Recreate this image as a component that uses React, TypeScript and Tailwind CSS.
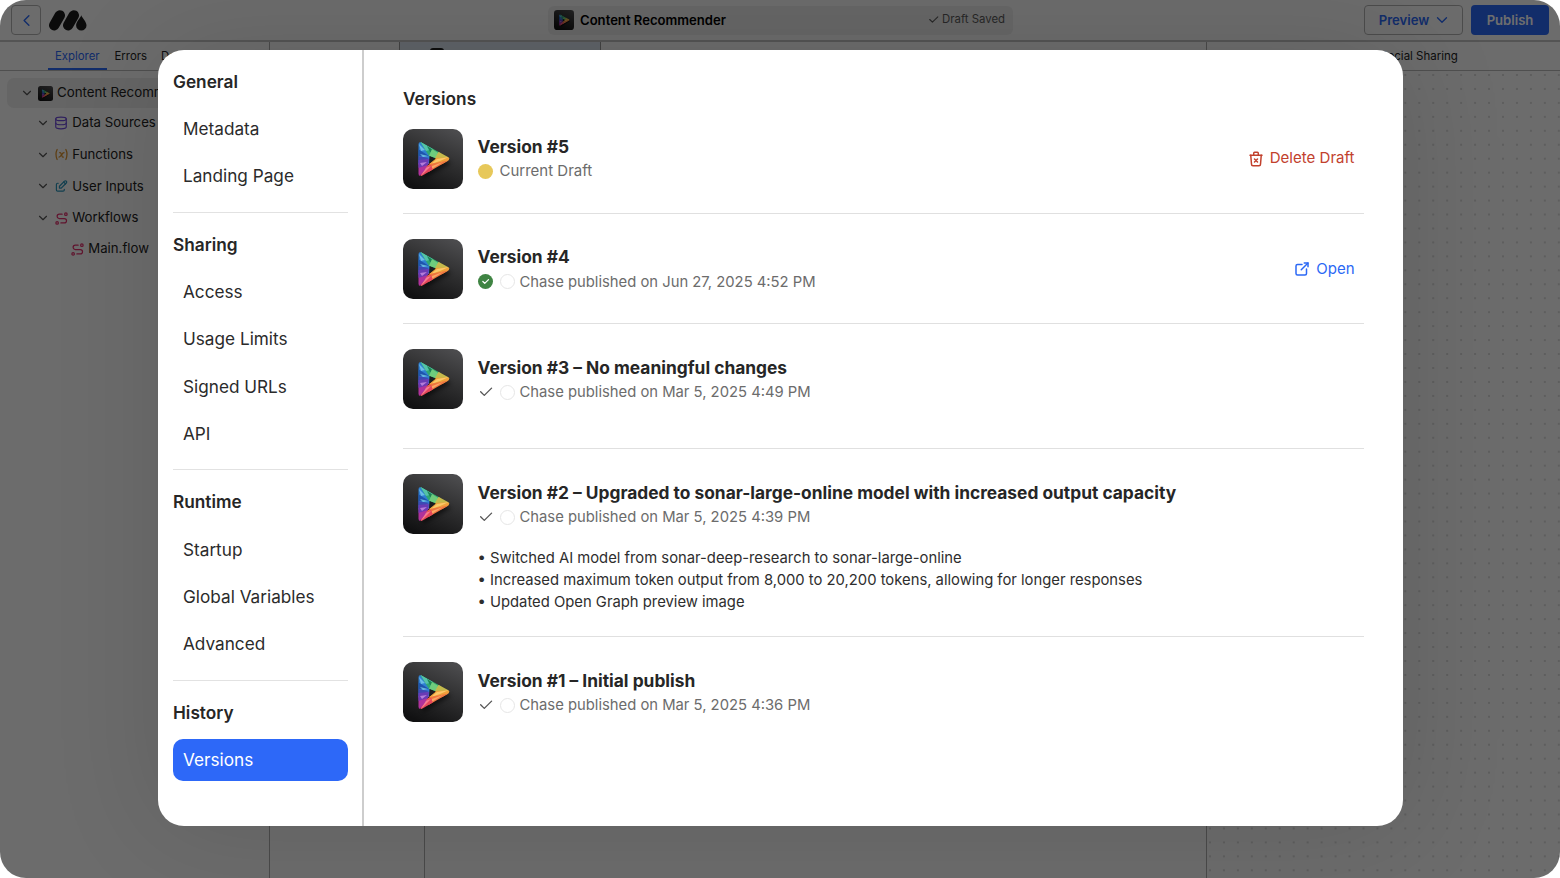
import React, { useId } from "react";
import { TbRoute, TbVariable, TbTrashX, TbExternalLink, TbEdit, TbCheck, TbChevronDown, TbChevronLeft } from "react-icons/tb";
import { Database } from "lucide-react";

function AppIcon({ className }: { className: string }) {
  const id = useId();
  return (
    <svg viewBox="0 0 60 60" className={className}>
      <defs>
        <linearGradient id={id + "b"} x1="0.75" y1="0" x2="0.3" y2="1">
          <stop offset="0" stopColor="#4b4b4d" />
          <stop offset="0.5" stopColor="#2d2d2e" />
          <stop offset="1" stopColor="#111112" />
        </linearGradient>
        <clipPath id={id + "c"}>
          <path d="M15.500 15.500q0-3.200 3-1.900L45 28q2.400 1.800 0 3.800L19.500 46.500q-4 1.600-4-1.800z" />
        </clipPath>
        <filter id={id + "s"} x="-50%" y="-50%" width="200%" height="200%">
          <feGaussianBlur stdDeviation="2.2" />
        </filter>
      </defs>
      <rect width="60" height="60" rx="10" fill={`url(#${id}b)`} />
      <path d="M17 19L48 34 20 50z" fill="#000" opacity="0.55" filter={`url(#${id}s)`} />
      <g clipPath={`url(#${id}c)`}>
        <path d="M12 8L20 14 27 27 26 35 12 36z" fill="#2f7fd2" />
        <path d="M15 20L26 27 15 27z" fill="#1f55ad" />
        <path d="M15 27L26 29 15 35z" fill="#3d49b4" />
        <path d="M16 11L38 24 34 30 26 27z" fill="#2fa873" />
        <path d="M17 12L30 20 23 22z" fill="#55c2a8" />
        <path d="M24 17L35 24 27 23z" fill="#1d8355" />
        <path d="M29 20L37 25 33 29 26 27z" fill="#6fcc7d" />
        <path d="M36 22L49 29 44 31 32 29z" fill="#c3b94c" />
        <path d="M49 28L47 33 30 38 26 35 33 29z" fill="#f0a03a" />
        <path d="M46 28L37 32 28 35 34 30z" fill="#fac869" />
        <path d="M48 31L27 44 22 38 27 35z" fill="#ef7440" />
        <path d="M40 33L27 41 29 37z" fill="#f9a765" />
        <path d="M28 36L30 41 17 49 19 40z" fill="#e4475a" />
        <path d="M28 37L18 47 22 39z" fill="#f77c8f" />
        <path d="M12 34L26 34 21 42 14 50z" fill="#b0329b" />
        <path d="M14 31L26 30 25 36 15 39z" fill="#6a3ab4" />
        <path d="M16 15l6 6-4 1zM17 25l8 2-5 1z" fill="#79cdea" opacity="0.8" />
        <path d="M17 34l7-1-5 4z" fill="#d59bea" opacity="0.7" />
        <path d="M26.500 27L32.500 29.800 26.500 34.500z" fill="#1c1c1f" />
      </g>
    </svg>
  );
}

function Logo() {
  return (
    <svg viewBox="0 0 40 24" className="ml-[7px] h-6 w-10 shrink-0">
      <g stroke="#1b1b1b" strokeWidth="10.400" strokeLinecap="round">
        <path d="M6.200 17.300L11.800 7.400M20.200 17.300L25.800 7.400" />
      </g>
      <path d="M33.300 7.300c1 3 5.200 6.400 5.200 10.100a5.200 5.200 0 0 1-10.400 0c0-3.700 4.200-7.100 5.200-10.100z" fill="#1b1b1b" />
    </svg>
  );
}

const sections = [
  { title: "General", items: ["Metadata", "Landing Page"] },
  { title: "Sharing", items: ["Access", "Usage Limits", "Signed URLs", "API"] },
  { title: "Runtime", items: ["Startup", "Global Variables", "Advanced"] },
  { title: "History", items: ["Versions"] },
];

type Status = "draft" | "live" | "past";

interface Version {
  title: string;
  status: Status;
  meta: string;
  height: string;
  notes?: string[];
}

const versions: Version[] = [
  { title: "Version #5", status: "draft", meta: "Current Draft", height: "h-[85.300px]" },
  { title: "Version #4", status: "live", meta: "Chase published on Jun 27, 2025 4:52 PM", height: "h-[110.300px]" },
  { title: "Version #3 – No meaningful changes", status: "past", meta: "Chase published on Mar 5, 2025 4:49 PM", height: "h-[125px]" },
  {
    title: "Version #2 – Upgraded to sonar-large-online model with increased output capacity",
    status: "past",
    meta: "Chase published on Mar 5, 2025 4:39 PM",
    height: "h-[188px]",
    notes: [
      "• Switched AI model from sonar-deep-research to sonar-large-online",
      "• Increased maximum token output from 8,000 to 20,200 tokens, allowing for longer responses",
      "• Updated Open Graph preview image",
    ],
  },
  { title: "Version #1 – Initial publish", status: "past", meta: "Chase published on Mar 5, 2025 4:36 PM", height: "h-[110px]" },
];

function StatusMark({ status }: { status: Status }) {
  if (status === "draft") return <span className="ml-[0.500px] mr-[6.500px] size-[15px] rounded-full bg-[#e7c85a]" />;
  return (
    <>
      {status === "live" ? (
        <span className="ml-[0.500px] mr-[0.500px] flex size-[15px] items-center justify-center rounded-full bg-[#3f8443]">
          <TbCheck className="size-[9px] text-white" strokeWidth={3.5} />
        </span>
      ) : (
        <TbCheck className="-ml-[0.500px] -mr-[1px] size-[17.500px] text-[#555]" strokeWidth={1.8} />
      )}
      <span className="ml-[6px] mr-[5px] size-[15px] rounded-full border border-[#e6e6e6]" />
    </>
  );
}

function VersionRow({ v, first, last }: { v: Version; first: boolean; last: boolean }) {
  return (
    <div className={`${v.height} flex shrink-0 ${first ? "" : "pt-[25px]"} ${last ? "" : "border-b border-[#e0e0e0]"}`}>
      <AppIcon className="size-[60px] shrink-0" />
      <div className="ml-[14.500px] flex-1">
        <h3 className="mt-[6.500px] h-6 whitespace-nowrap text-[17.350px] font-bold leading-6 text-[#262626]">{v.title}</h3>
        <div className="mt-[1.500px] flex h-[22px] items-center whitespace-nowrap text-[14.800px] text-[#6c6c6c]">
          <StatusMark status={v.status} />
          <span className={v.status === "draft" ? "text-[15px]" : ""}>{v.meta}</span>
        </div>
        {v.notes && (
          <div className="mt-[20px] text-[14.800px] leading-[21.700px] text-[#2e2e2e]">
            {v.notes.map((n) => (
              <p key={n} className="whitespace-nowrap">{n}</p>
            ))}
          </div>
        )}
      </div>
      {v.status === "draft" && (
        <button className="mr-[9.500px] flex h-[60px] items-center gap-[5px] text-[15.050px] text-[#c2412d]">
          <TbTrashX className="size-[18px]" />
          Delete Draft
        </button>
      )}
      {v.status === "live" && (
        <button className="mr-[9.500px] flex h-[60px] items-center gap-[5px] text-[15px] text-[#2b68f5]">
          <TbExternalLink className="size-[18px]" />
          Open
        </button>
      )}
    </div>
  );
}

function SettingsModal() {
  return (
    <div className="absolute left-[158px] top-[50px] flex h-[776px] w-[1245px] overflow-hidden rounded-[26px] bg-white">
      <nav className="flex w-[206px] shrink-0 flex-col border-r-2 border-[#cdcdcd] pl-[15px] pr-[14.500px] pt-[8.100px]">
        {sections.map((s, i) => (
          <React.Fragment key={s.title}>
            {i > 0 && <div className="mb-[8.200px] mt-[12.100px] h-px shrink-0 bg-[#e2e2e2]" />}
            <div className="flex h-[47.250px] shrink-0 items-center text-[17.250px] font-semibold text-[#262626]">{s.title}</div>
            {s.items.map((it) => (
              <div key={it} className="flex h-[47.250px] shrink-0 items-center">
                <span
                  className={`flex h-[42.500px] w-[174.500px] items-center rounded-[10px] px-[10px] text-[17.200px] ${
                    it === "Versions" ? "bg-[#2d68f8] text-white" : "text-[#2b2b2b]"
                  }`}
                >
                  {it}
                </span>
              </div>
            ))}
          </React.Fragment>
        ))}
      </nav>
      <main className="flex flex-1 flex-col pl-[39px] pr-[39px] pt-[36.500px]">
        <h2 className="mb-[18px] h-6 shrink-0 text-[17.250px] font-semibold leading-6 text-[#262626]">Versions</h2>
        {versions.map((v, i) => (
          <VersionRow key={v.title} v={v} first={i === 0} last={i === versions.length - 1} />
        ))}
      </main>
    </div>
  );
}

const tree = [
  { label: "Data Sources", icon: <Database className="size-[14px] text-[#6d4ad8]" strokeWidth={2} /> },
  { label: "Functions", icon: <TbVariable className="size-[15px] text-[#d98f2b]" /> },
  { label: "User Inputs", icon: <TbEdit className="size-[14.500px] text-[#2a93b8]" /> },
  { label: "Workflows", icon: <TbRoute className="size-[15px] text-[#e0326d]" /> },
];

function Header() {
  return (
    <header className="flex h-[42px] shrink-0 items-center justify-between border-b-2 border-[#c4c4c4] pl-[11px] pr-[11px]">
      <div className="flex w-[537px] items-center">
        <div className="flex size-[30px] items-center justify-center rounded-[4px] border border-[#b0b0b0]">
          <TbChevronLeft className="size-[19px] text-[#2b68f5]" strokeWidth={1.8} />
        </div>
        <Logo />
      </div>
      <div className="flex h-[29px] w-[465px] items-center rounded-[6px] bg-[#ececec] pl-[6px] pr-[8px]">
        <AppIcon className="size-5" />
        <span className="ml-[6px] pt-px text-[13.100px] font-semibold text-black">Content Recommender</span>
        <span className="ml-auto flex items-center gap-[2px] text-[11.400px] text-[#5c5c5c]">
          <TbCheck className="size-[13px]" />
          Draft Saved
        </span>
      </div>
      <div className="flex w-[536px] justify-end gap-[8px] text-[13.100px] font-semibold">
        <div className="flex h-[30px] w-[99px] items-center justify-center gap-[4px] rounded-[4px] border border-[#b0b0b0] pl-[3px] text-[#2b68f5]">
          <span className="pt-px">Preview</span>
          <TbChevronDown className="size-[18px]" strokeWidth={1.8} />
        </div>
        <div className="flex h-[30px] w-[78px] items-center justify-center rounded-[4px] bg-[#2b68f5] pt-px text-white">Publish</div>
      </div>
    </header>
  );
}

function Explorer() {
  return (
    <aside className="flex w-[270px] shrink-0 flex-col border-r border-[#ababab]">
      <div className="flex h-[29px] shrink-0 border-b border-[#b8b8b8] text-[11.400px] text-[#222]">
        <span className="ml-[48px] flex w-[58.500px] items-center justify-center border-b-2 border-[#2b68f5] pt-[3px] text-[#2b68f5]">Explorer</span>
        <span className="ml-[8px] flex items-center pt-px">Errors</span>
        <span className="ml-[14px] flex w-[40px] items-center overflow-hidden pt-px">Debug</span>
      </div>
      <div className="ml-[7px] mt-[7px] flex h-[30px] items-center overflow-hidden whitespace-nowrap rounded-[7px] bg-[#eaeaea] pl-[13px] text-[13.300px] text-[#222]">
        <TbChevronDown className="size-[14px] text-[#555]" />
        <AppIcon className="ml-[4px] mr-[4px] size-[15px] shrink-0" />
        <span className="w-[106px] overflow-hidden">Content Recommender</span>
      </div>
      <div className="-mt-[0.500px]">
        {tree.map((t) => (
          <div key={t.label} className="flex h-[31.600px] items-center pl-[36px] text-[13.200px] text-[#222]">
            <TbChevronDown className="mr-[4px] size-[14px] text-[#555]" />
            <span className="flex w-[18.300px] items-center">{t.icon}</span>
            {t.label}
          </div>
        ))}
      </div>
      <div className="flex h-[31px] items-center pl-[70px] text-[13.200px] text-[#222]">
        <TbRoute className="mr-[3.300px] size-[15px] text-[#e0326d]" />
        Main.flow
      </div>
    </aside>
  );
}

export default function App() {
  return (
    <div className="relative h-[878px] w-[1560px] overflow-hidden bg-white font-['Inter',sans-serif]">
      <div className="relative flex h-[877.500px] flex-col overflow-hidden rounded-[26px] bg-[#fbfbfb]">
        <Header />
        <div className="flex min-h-0 flex-1">
          <Explorer />
          <section className="flex flex-1 flex-col">
            <div className="flex h-[29px] shrink-0 pl-[129px]">
              <div className="w-[202px] border-x border-[#9a9a9a] bg-[#dde6f2] pl-[30px] pt-[6px]">
                <div className="size-[14px] rounded-[3px] bg-[#222]" />
              </div>
            </div>
            <div className="flex-1 pl-[154px]">
              <div className="h-full w-px bg-[#ababab]" />
            </div>
          </section>
          <aside className="flex w-[354px] flex-col border-l border-[#ababab]">
            <div className="flex h-[29px] shrink-0 items-center border-b border-[#b8b8b8] pl-[173px] pt-px text-[11.500px] text-[#222]">Social Sharing</div>
            <div className="flex-1 bg-[radial-gradient(circle,#d9d9d9_0.900px,transparent_1.300px)] bg-[length:13.960px_13.960px] bg-[position:-4px_-3px]" />
          </aside>
        </div>
        <div className="absolute inset-0 bg-black/57" />
        <div className="absolute left-[158px] top-[50px] h-[776px] w-[1245px] rounded-[26px] shadow-[0_0_110px_rgba(0,0,0,0.12)]" />
      </div>
      <SettingsModal />
    </div>
  );
}
